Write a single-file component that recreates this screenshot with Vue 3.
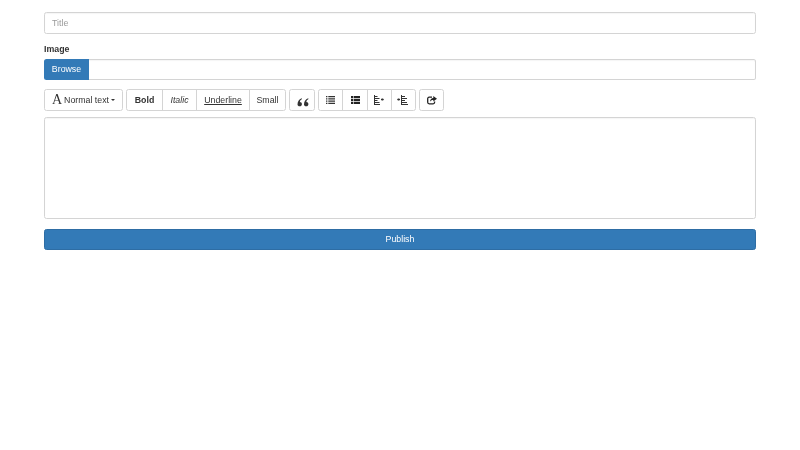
<script setup>
const styles = [
  { label: 'Bold', cls: 'bold', w: 37 },
  { label: 'Italic', cls: 'italic', w: 35 },
  { label: 'Underline', cls: 'under', w: 54 },
  { label: 'Small', cls: '', w: 37 },
]
</script>

<template>
  <form class="page" @submit.prevent>
    <div class="field">
      <input class="input" type="text" placeholder="Title" />
    </div>
    <label class="label">Image</label>
    <div class="file">
      <span class="browse">Browse</span>
      <span class="file-name"></span>
    </div>
    <div class="toolbar">
      <div class="group">
        <button type="button" class="btn heading">
          <span class="big-a">A</span>
          <span>Normal text</span>
          <span class="caret"></span>
        </button>
      </div>
      <div class="group">
        <button
          v-for="s in styles"
          :key="s.label"
          type="button"
          class="btn"
          :class="s.cls"
          :style="{ width: s.w + 'px' }"
        >{{ s.label }}</button>
      </div>
      <div class="group">
        <button type="button" class="btn quote">
          <svg width="12" height="9" viewBox="0 0 13 10">
            <path fill="#333" d="M.4 7.300C.4 4.200 1.900 1.700 5 .3l.4.8C3.800 2 3.100 3.100 3 4.400c1.300 0 2.300.9 2.300 2.300C5.300 8.200 4.300 9.300 2.900 9.300 1.400 9.300.4 8.500.4 7.300zM7.600 7.300C7.600 4.200 9.100 1.700 12.200.3l.4.8C11 2 10.300 3.100 10.200 4.400c1.300 0 2.300.9 2.300 2.300 0 1.500-1 2.600-2.400 2.600-1.500 0-2.500-.8-2.500-2z"/>
          </svg>
        </button>
      </div>
      <div class="group">
        <button type="button" class="btn icon">
          <svg width="9" height="8" viewBox="0 0 9 8">
            <path fill="#333" d="M0 0h1.400v1.300H0zM0 2.200h1.400v1.300H0zM0 4.500h1.400v1.300H0zM0 6.700h1.400V8H0zM2.300 0H9v1.300H2.300zM2.300 2.200H9v1.300H2.300zM2.300 4.500H9v1.300H2.300zM2.300 6.700H9V8H2.300z"/>
          </svg>
        </button>
        <button type="button" class="btn icon mid">
          <svg width="9" height="8" viewBox="0 0 9 8">
            <path fill="#222" d="M0 0h2.300v2.300H0zM0 2.900h2.300v2.200H0zM0 5.700h2.300V8H0zM2.900 0H9v2.300H2.900zM2.900 2.900H9v2.200H2.900zM2.900 5.700H9V8H2.900z"/>
          </svg>
        </button>
        <button type="button" class="btn icon nudge">
          <svg width="10" height="10" viewBox="0 0 10 10">
            <path fill="none" stroke="#333" d="M.5 0v10M.5 1.500H3.500M.5 3.500H5.500M.5 5.500H3.500M.5 7.500H5.500M.5 9.500H6"/>
            <path fill="#333" d="M7 3.800h1.500V3L10 4.500 8.500 6v-.8H7z"/>
          </svg>
        </button>
        <button type="button" class="btn icon nudge">
          <svg width="11" height="10" viewBox="0 0 11 10">
            <path fill="none" stroke="#333" d="M4.500 0v10M4.500 1.500H8M4.500 3.500H10M4.500 5.500H8M4.500 7.500H10M4.500 9.500H11"/>
            <path fill="#333" d="M3 3.800H1.500V3L0 4.500 1.500 6v-.8H3z"/>
          </svg>
        </button>
      </div>
      <div class="group">
        <button type="button" class="btn icon">
          <svg width="10" height="9" viewBox="0 0 10 9">
            <path fill="none" stroke="#222" stroke-width="1.300" d="M5 1.200H2.200C1.300 1.200.7 1.800.7 2.700v3.600c0 .9.6 1.500 1.500 1.500h3.900c.9 0 1.500-.6 1.500-1.500V5.500"/>
            <path fill="#222" d="M6.300 0L10 2.800 6.300 5.500V4C4.700 4 3.500 4.500 3 6c0-2.300 1.300-3.800 3.300-3.900z"/>
          </svg>
        </button>
      </div>
    </div>
    <textarea class="editor"></textarea>
    <button type="submit" class="publish">Publish</button>
  </form>
</template>

<style scoped>
.page {
  width: 712px;
  margin: 0 auto;
  padding-top: 12px;
  font-family: "Liberation Sans", Arial, sans-serif;
  font-size: 8.8px;
  color: #333;
  filter: blur(0.35px);
}
.field {
  margin-bottom: 9.375px;
}
.input {
  display: block;
  box-sizing: border-box;
  width: 100%;
  height: 21.5px;
  padding: 0 7px;
  border: 1px solid #d4d4d4;
  border-radius: 2.5px;
  box-shadow: inset 0 1px 1px rgba(0, 0, 0, 0.04);
  font: inherit;
  color: #555;
  outline: none;
}
.input::placeholder {
  color: #999;
  opacity: 1;
}
.label {
  display: block;
  height: 12.5px;
  line-height: 12.5px;
  margin-bottom: 3.125px;
  font-weight: 700;
}
.file {
  display: flex;
  height: 21.25px;
  margin-bottom: 9.375px;
}
.browse {
  box-sizing: border-box;
  width: 45px;
  line-height: 21.25px;
  text-align: center;
  color: #fff;
  background: #337ab7;
  border-radius: 2.5px 0 0 2.5px;
}
.file-name {
  flex: 1;
  border: 1px solid #d4d4d4;
  border-left: 0;
  border-radius: 0 2.5px 2.5px 0;
  box-shadow: inset 0 1px 1px rgba(0, 0, 0, 0.04);
}
.toolbar {
  display: flex;
  gap: 3px;
  margin-bottom: 5.5px;
}
.group {
  display: flex;
}
.btn {
  box-sizing: border-box;
  height: 22px;
  padding: 0;
  margin-left: -1px;
  border: 1px solid #d4d4d4;
  background: #fff;
  font: inherit;
  color: #333;
  display: flex;
  align-items: center;
  justify-content: center;
}
.btn:first-child {
  margin-left: 0;
  border-radius: 2.5px 0 0 2.5px;
}
.btn:last-child {
  border-radius: 0 2.5px 2.5px 0;
}
.btn:only-child {
  border-radius: 2.5px;
}
.heading {
  width: 79px;
  gap: 2px;
}
.big-a {
  font-family: "Liberation Serif", serif;
  font-size: 14px;
  line-height: 1;
  font-weight: 400;
}
.caret {
  width: 0;
  height: 0;
  border-top: 2.5px solid #333;
  border-left: 2.5px solid transparent;
  border-right: 2.5px solid transparent;
}
.bold { font-weight: 700; }
.italic { font-style: italic; }
.under { text-decoration: underline; }
.icon { width: 25px; }
.mid { width: 26px; }
.nudge svg { margin-right: 2px; }
.quote { width: 26px; }
.quote svg { margin: 4px 0 0 1px; }
.editor {
  display: block;
  box-sizing: border-box;
  width: 100%;
  height: 102.5px;
  margin: 0 0 9.375px;
  border: 1px solid #d4d4d4;
  border-radius: 2.5px;
  box-shadow: inset 0 1px 1px rgba(0, 0, 0, 0.04);
  resize: none;
  outline: none;
}
.publish {
  display: block;
  box-sizing: border-box;
  width: 100%;
  height: 21.25px;
  padding: 0;
  border: 1px solid #2e6da4;
  border-radius: 2.5px;
  background: #337ab7;
  color: #fff;
  font: inherit;
}
</style>
